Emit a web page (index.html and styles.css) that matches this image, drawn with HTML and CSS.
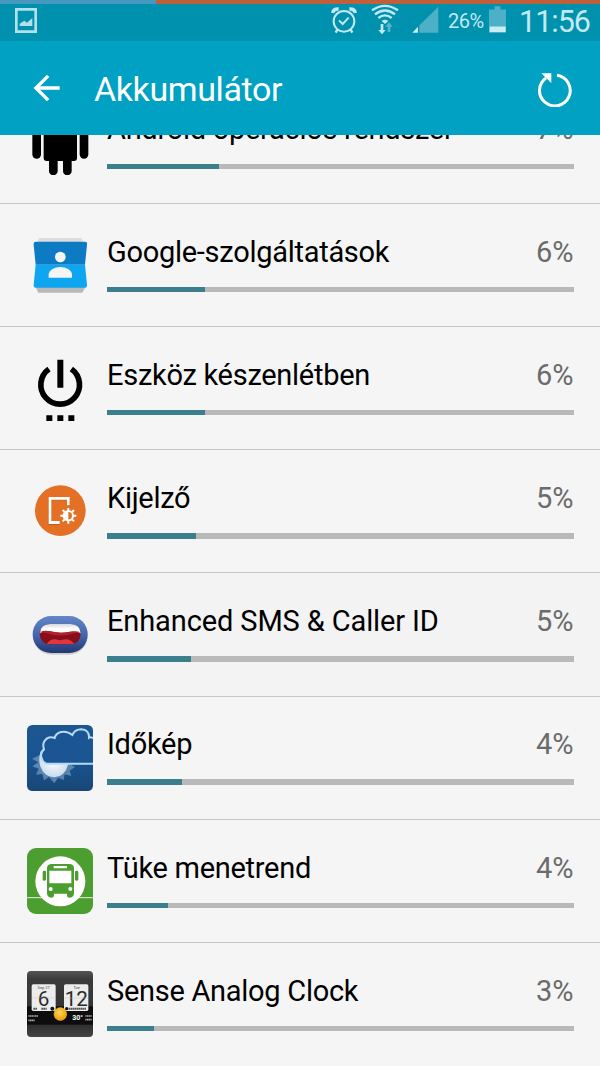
FILE: index.html
```html
<!DOCTYPE html>
<html lang="hu">
<head>
  <meta charset="UTF-8" />
  <meta name="viewport" content="width=device-width, initial-scale=1" />
  <title>Akkumulátor</title>
  <link rel="stylesheet" href="styles.css">
</head>
<body>

  <div class="progress-strip"><div class="progress-done"></div></div>

  <div class="status-bar">
    <svg class="st-picture" viewBox="0 0 66 75">
      <path d="M0 0H66V75H0ZM8 8V67H58V8Z" fill="#b3e0ea" fill-rule="evenodd" />
      <path d="M14 54V47L28 38L36 44L52 30V54Z" fill="#b3e0ea" />
    </svg>
    <div class="status-right">
      <svg class="st-alarm" viewBox="92 18 78 84" fill="none" stroke="#c3e9f0" stroke-width="6">
        <circle cx="131" cy="64" r="31" />
        <path d="M116 61L127 72L145 53" />
        <path d="M97 39Q99 26 115 27M165 39Q163 26 147 27" stroke-width="10" />
        <path d="M111 89L106 98M151 89L156 98" stroke-width="7" />
      </svg>
      <svg class="st-wifi" viewBox="214 12 84 90" fill="none" stroke="#c3e9f0" stroke-width="7">
        <path d="M217 31Q256 4 295 31" />
        <path d="M226 43Q256 20 286 43" />
        <path d="M236 54Q256 38 276 54" />
        <path d="M246 63Q256 55 266 63L256 72Z" fill="#c3e9f0" stroke="none" />
        <path d="M243 72H251V90H258L247 103L236 90H243Z" fill="#c3e9f0" stroke="none" />
        <path d="M264 96H272V80H279L268 67L257 80H264Z" fill="#59b6ca" stroke="none" />
      </svg>
      <svg class="st-signal" viewBox="336 18 82 82">
        <path d="M416 20V99H358V77Z" fill="#4eb0c6" />
        <path d="M354 81V99H337Z" fill="#c9edf3" />
      </svg>
      <span class="st-percent">26%</span>
      <svg class="st-battery" viewBox="569 17 52 81">
        <path d="M586 17H604V27H621V98H569V27H586Z" fill="#4eb0c6" />
        <path d="M571 79H620V96H571Z" fill="#c9edf3" />
      </svg>
      <span class="st-time">11:56</span>
    </div>
  </div>

  <header class="app-bar">
    <svg class="back" viewBox="100 222 82 84" fill="none" stroke="#fff" stroke-width="10">
      <path d="M181 264H108M146 227L109 264L146 301" />
    </svg>
    <h1>Akkumulátor</h1>
    <svg class="refresh" viewBox="710 215 105 105">
      <path d="M770 225A46 46 0 1 1 737 233" fill="none" stroke="#fff" stroke-width="9" />
      <path d="M723 219H753V248Z" fill="#fff" />
    </svg>
  </header>

  <main class="viewport">
    <ul class="list">
      <li class="row">
        <svg class="icon" viewBox="81 -47 198 198">
          <rect x="97" y="-10" width="26" height="112" rx="13" />
          <rect x="131" y="-15" width="100" height="124" rx="9" />
          <rect x="239" y="-10" width="26" height="112" rx="13" />
          <rect x="147" y="80" width="26" height="72" rx="13" />
          <rect x="189" y="80" width="26" height="72" rx="13" />
        </svg>
        <div class="info">
          <div class="label"><span>Android operációs rendszer</span><span class="pct">7%</span></div>
          <div class="bar"><div class="fill" style="width: 24%"></div></div>
        </div>
      </li>
      <li class="row">
        <svg class="icon" viewBox="21 22 198 198">
          <path d="M49 60L57 40H184L194 60Z" fill="#dcdcdc" />
          <path d="M45 184H198L187 204H55Z" fill="#b9b9b9" />
          <path d="M47 51H195Q203 51 201 60L195 120H47L41 60Q40 51 47 51Z" fill="#0d7bc4" />
          <path d="M47 120H195L201 180Q202 189 194 189H48Q40 189 41 180Z" fill="#0ea5f1" />
          <circle cx="121" cy="97" r="16" fill="#f5f5f5" />
          <path d="M86 159V149C88 136 104 127 121 127S154 136 156 149V159Z" fill="#f5f5f5" />
        </svg>
        <div class="info">
          <div class="label"><span>Google-szolgáltatások</span><span class="pct">6%</span></div>
          <div class="bar"><div class="fill" style="width: 21%"></div></div>
        </div>
      </li>
      <li class="row">
        <svg class="icon" viewBox="21 17 198 198">
          <path d="M87 59A58 58 0 1 0 154 59" fill="none" stroke="#000" stroke-width="17" />
          <path d="M112 31H130V115H112ZM79 198H97V216H79ZM112 198H130V216H112ZM145 198H163V216H145Z" />
        </svg>
        <div class="info">
          <div class="label"><span>Eszköz készenlétben</span><span class="pct">6%</span></div>
          <div class="bar"><div class="fill" style="width: 21%"></div></div>
        </div>
      </li>
      <li class="row">
        <svg class="icon" viewBox="21 12 198 198">
          <circle cx="121" cy="110" r="76" fill="#e37025" />
          <path d="M88 70H150V96H142V79H94V144H119V153H86V70Z" fill="#8c4a22" opacity=".45" />
          <path d="M86 69H149V94H141V77H94V141H119V150H86Z" fill="#fff" />
          <g stroke="#fff" stroke-width="6">
            <path d="M145 102V149M121 125H169M128 108L162 142M162 108L128 142" />
          </g>
          <circle cx="145" cy="125" r="17" fill="#fff" />
          <path d="M145 114A11 11 0 0 1 145 136Z" fill="#e37025" />
        </svg>
        <div class="info">
          <div class="label"><span>Kijelző</span><span class="pct">5%</span></div>
          <div class="bar"><div class="fill" style="width: 19%"></div></div>
        </div>
      </li>
      <li class="row shaded">
        <svg class="icon" viewBox="21 6 198 198">
          <defs>
            <linearGradient id="lips" x1="0" y1="0" x2="0" y2="1">
              <stop offset="0" stop-color="#6587c8" />
              <stop offset=".55" stop-color="#4263aa" />
              <stop offset="1" stop-color="#21376f" />
            </linearGradient>
            <linearGradient id="teeth" x1="0" y1="0" x2="0" y2="1">
              <stop offset="0" stop-color="#d4dad9" />
              <stop offset=".5" stop-color="#fff" />
            </linearGradient>
          </defs>
          <rect x="39" y="52" width="164" height="112" rx="56" fill="#c9cbd0" />
          <rect x="38" y="48" width="165" height="111" rx="55" fill="url(#lips)" />
          <rect x="59" y="72" width="123" height="61" rx="30" fill="#85101c" />
          <path d="M60 100Q61 73 90 72H152Q180 73 182 100Q168 92 150 95Q121 102 90 94Q72 91 60 100Z" fill="url(#teeth)" />
          <path d="M60 97Q72 90 90 94Q121 102 150 95Q168 91 182 97Q166 98 152 103Q121 110 90 103Q74 97 60 97Z" fill="#b3202c" />
          <path d="M80 132Q90 117 105 118Q121 123 136 118Q152 117 163 132Z" fill="#e5343b" />
        </svg>
        <div class="info">
          <div class="label"><span>Enhanced SMS &amp; Caller ID</span><span class="pct">5%</span></div>
          <div class="bar"><div class="fill" style="width: 18%"></div></div>
        </div>
      </li>
      <li class="row">
        <svg class="icon" viewBox="21 25 198 198">
          <defs>
            <linearGradient id="sky" x1="0" y1="0" x2="0" y2="1">
              <stop offset="0" stop-color="#1d568f" />
              <stop offset=".5" stop-color="#195493" />
              <stop offset="1" stop-color="#194777" />
            </linearGradient>
            <radialGradient id="sun" cx=".5" cy=".4">
              <stop offset="0" stop-color="#fff" />
              <stop offset="1" stop-color="#cfe0ee" />
            </radialGradient>
          </defs>
          <rect x="21" y="25" width="198" height="198" rx="16" fill="url(#sky)" />
          <path d="M62 114L36 126L55 137L37 149L56 156L48 174L67 172L72 191L87 181L103 200L114 183L131 190L134 173L154 178L149 162L165 151L149 142H80Z" fill="#89a9c8" opacity=".6" />
          <path d="M63 103Q53 125 62 152Q74 181 103 182Q135 180 145 142H78Z" fill="url(#sun)" />
          <path d="M219 64Q211 60 207 63Q208 39 184 38Q165 38 157 55Q142 42 123 46Q107 50 104 64Q84 57 73 74Q67 84 72 98Q59 108 65 124Q68 137 80 141H219Z" fill="#1b5593" />
          <path d="M219 64Q211 60 207 63Q208 39 184 38Q165 38 157 55Q142 42 123 46Q107 50 104 64Q84 57 73 74Q67 84 72 98Q59 108 65 124Q68 137 80 141H219" fill="none" stroke="#b5d9f6" stroke-width="6" />
        </svg>
        <div class="info">
          <div class="label"><span>Időkép</span><span class="pct">4%</span></div>
          <div class="bar"><div class="fill" style="width: 16%"></div></div>
        </div>
      </li>
      <li class="row">
        <svg class="icon" viewBox="21 25 198 198">
          <rect x="21" y="25" width="198" height="198" rx="27" fill="#4c9e31" />
          <path d="M21 174H219" stroke="#e4f1df" stroke-width="3" />
          <circle cx="121" cy="125" r="75" fill="#fff" />
          <g fill="#4c9e31">
            <path d="M81 84Q82 73 95 73H148Q161 73 162 84V162H81Z" />
            <rect x="68" y="93" width="10" height="30" rx="4" />
            <rect x="165" y="93" width="10" height="30" rx="4" />
            <path d="M81 160H102V168Q101 174 94 174Q81 173 81 160ZM141 160H162Q162 173 149 174Q141 174 141 168Z" />
          </g>
          <path d="M88 93H154V131H88ZM101 79H141V86H101Z" fill="#fff" />
          <circle cx="92" cy="148" r="6" fill="#fff" />
          <circle cx="151" cy="148" r="6" fill="#fff" />
        </svg>
        <div class="info">
          <div class="label"><span>Tüke menetrend</span><span class="pct">4%</span></div>
          <div class="bar"><div class="fill" style="width: 13%"></div></div>
        </div>
      </li>
      <li class="row">
        <svg class="icon clock" viewBox="21 26 198 198">
          <defs>
            <linearGradient id="case" x1="0" y1="0" x2="0" y2="1">
              <stop offset="0" stop-color="#555" />
              <stop offset=".12" stop-color="#3c3c3c" />
              <stop offset=".8" stop-color="#2e2e2e" />
              <stop offset="1" stop-color="#444" />
            </linearGradient>
            <radialGradient id="ball" cx=".45" cy=".4">
              <stop offset="0" stop-color="#ffd75a" />
              <stop offset="1" stop-color="#eea412" />
            </radialGradient>
          </defs>
          <rect x="21" y="26" width="198" height="198" rx="12" fill="url(#case)" />
          <rect x="21" y="132" width="198" height="55" fill="#0d0d0d" />
          <rect x="35" y="66" width="72" height="80" rx="5" fill="#ececec" />
          <rect x="132" y="66" width="73" height="80" rx="5" fill="#ececec" />
          <text x="71" y="80" font-size="12" fill="#444">Sep 27</text>
          <text x="170" y="80" font-size="12" fill="#444">Tue</text>
          <text x="71" y="130" font-size="62" fill="#2a2a2a">6</text>
          <text x="169" y="130" font-size="62" fill="#2a2a2a">12</text>
          <path d="M35 107H107M132 107H205" stroke="#bbb" stroke-width="1" />
          <path d="M40 139H52M64 139H80M146 139H198" stroke="#555" stroke-width="6" stroke-dasharray="5 1" />
          <circle cx="97" cy="139" r="6" fill="#111" />
          <circle cx="140" cy="139" r="5" fill="#111" />
          <circle cx="121" cy="155" r="20" fill="url(#ball)" />
          <text x="173" y="174" font-size="21" font-weight="700" fill="#fff">30°</text>
          <path d="M25 161H54M25 174H45M196 161H215M196 172H215" stroke="#aaa" stroke-width="5" stroke-dasharray="4 1" />
        </svg>
        <div class="info">
          <div class="label"><span>Sense Analog Clock</span><span class="pct">3%</span></div>
          <div class="bar"><div class="fill" style="width: 10%"></div></div>
        </div>
      </li>
    </ul>
  </main>

</body>
</html>
```
FILE: styles.css
```css
* {
  box-sizing: border-box;
}
body {
  margin: 0;
  height: 1066px;
  overflow: hidden;
  display: flex;
  flex-direction: column;
  font-family: Roboto, sans-serif;
  background: #f5f5f5;
  color: #000;
}
svg {
  display: block;
  flex: none;
}
.progress-strip {
  height: 4px;
  flex: none;
  background: #c0603b;
}
.progress-done {
  width: 156px;
  height: 4px;
  background: #4599bf;
}
.status-bar {
  height: 37px;
  flex: none;
  display: flex;
  justify-content: space-between;
  padding: 0 9px 0 15px;
  background: #0091ae;
  color: #c3e9f0;
}
.st-picture {
  width: 22px;
  height: 25px;
  margin-top: 4px;
}
.status-right {
  display: flex;
  align-items: flex-start;
}
.st-alarm {
  width: 26px;
  height: 28px;
  margin-top: 2px;
}
.st-wifi {
  width: 28px;
  height: 30px;
  margin-left: 14px;
}
.st-signal {
  width: 27px;
  height: 27px;
  margin: 2px 0 0 13px;
}
.st-percent {
  width: 36px;
  margin: 5px 0 0 9px;
  font-size: 20px;
  line-height: 24px;
  letter-spacing: -0.5px;
}
.st-battery {
  width: 17px;
  height: 27px;
  margin: 2px 0 0 5px;
}
.st-time {
  width: 72px;
  margin: 0 0 0 13px;
  font-size: 30.5px;
  line-height: 36px;
  letter-spacing: -1px;
}
.app-bar {
  height: 94px;
  flex: none;
  display: flex;
  align-items: center;
  padding: 0 28px 0 33px;
  background: #00a1c2;
  color: #fff;
}
.back {
  width: 27px;
  height: 28px;
}
.app-bar h1 {
  flex: 1;
  margin: 2px 0 0 34px;
  font-size: 34px;
  font-weight: 400;
  letter-spacing: -0.4px;
}
.refresh {
  width: 35px;
  height: 35px;
  margin-top: 2px;
}
.viewport {
  flex: 1;
  min-height: 0;
  overflow: hidden;
}
/* list is scrolled, first row sits half under the app bar */
.list {
  list-style: none;
  margin: -54.3px 0 0;
  padding: 0;
}
.row {
  height: 123.2px;
  display: flex;
  align-items: center;
  padding: 0 26.5px 0 27px;
  border-bottom: 1px solid #c6c6c6;
}
.row:last-child {
  border-bottom-color: transparent;
}
.row.shaded {
  background: #f3f3f3;
}
.icon {
  width: 66px;
  height: 66px;
}
.clock text {
  text-anchor: middle;
}
.info {
  flex: 1;
  margin: -4px 0 0 14px;
}
.label {
  display: flex;
  justify-content: space-between;
  font-size: 29px;
  line-height: 36px;
  letter-spacing: -0.28px;
}
.shaded .label {
  letter-spacing: -0.12px;
}
.label .pct {
  color: #6b6b6b;
  letter-spacing: 0;
}
.bar {
  height: 5.5px;
  margin-top: 17px;
  background: #b9b9b9;
}
.fill {
  height: 100%;
  background: #3b7e8c;
}
```
